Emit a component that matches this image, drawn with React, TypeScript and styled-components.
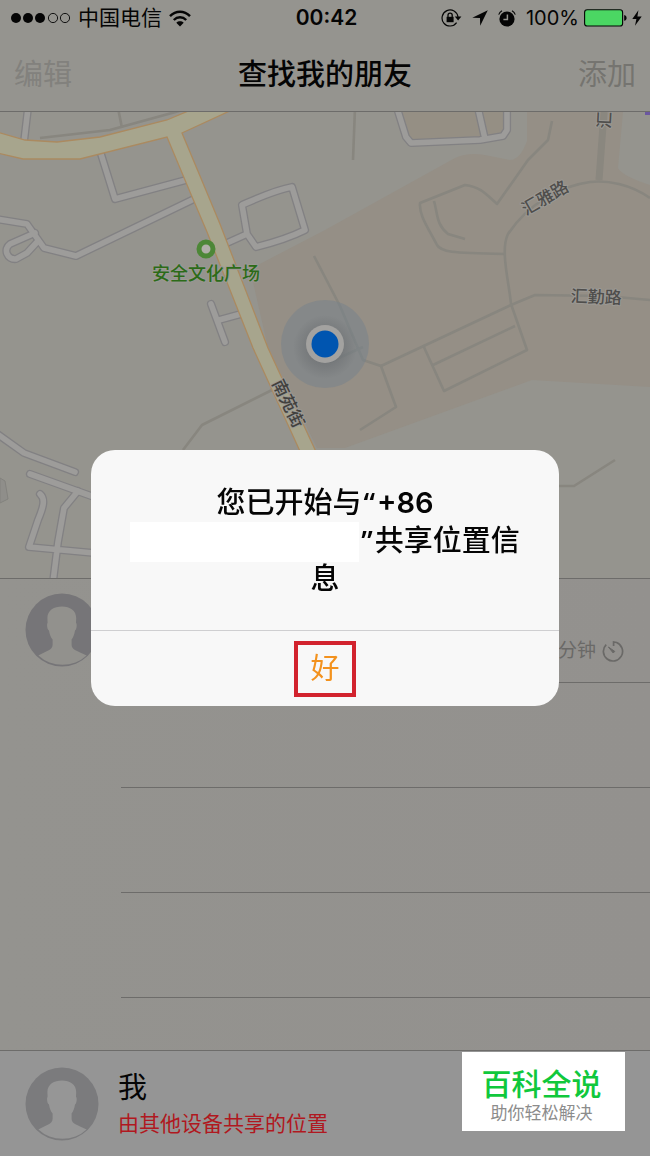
import React from "react";
import styled, { createGlobalStyle } from "styled-components";

const LATIN = `Inter, "Noto Sans CJK SC", sans-serif`;
const INK = "#050505";
const LINE = "#6d6c6a";

const GlobalStyle = createGlobalStyle`
  * { box-sizing: border-box; }
  body { margin: 0; background: #94938f; color: ${INK}; font-family: ${LATIN}; }
  h1, h2, p { margin: 0; font-weight: 400; }
  button { font: inherit; border: 0; padding: 0; background: none; cursor: pointer; }
  svg { display: block; }
`;

const Page = styled.div`
  min-height: 100vh;
  display: flex;
  flex-direction: column;
`;

const Header = styled.header`
  background: #95948f;
  border-bottom: 1px solid ${LINE};
`;

const StatusBar = styled.div`
  display: grid;
  grid-template-columns: 1fr auto 1fr;
  align-items: center;
  height: 36px;
  padding: 0 8px 0 11px;
  font-size: 20px;
  line-height: 24px;
`;

const StatusGroup = styled.div<{ $end?: boolean; $gap: number }>`
  display: flex;
  align-items: center;
  gap: ${(p) => p.$gap}px;
  justify-content: ${(p) => (p.$end ? "flex-end" : "flex-start")};
`;

const Carrier = styled.span`
  font-size: 21px;
`;

const Clock = styled.time`
  font-size: 21px;
  font-weight: 600;
`;

const NavBar = styled.nav`
  display: grid;
  grid-template-columns: 1fr auto 1fr;
  align-items: center;
  height: 75px;
  padding: 2px 14px 0;
  font-size: 29px;
  line-height: 40px;
`;

const Title = styled.h1`
  font-size: 29px;
  font-weight: 500;
`;

const NavButton = styled.button<{ $tone: string; $end?: boolean }>`
  color: ${(p) => p.$tone};
  justify-self: ${(p) => (p.$end ? "end" : "start")};
`;

const MapArea = styled.section`
  border-bottom: 1px solid ${LINE};
  svg { width: 100%; height: auto; }
`;

const List = styled.ul`
  flex: 1;
  margin: 0;
  padding: 0;
  list-style: none;
  background: linear-gradient(90deg, #94938f, #93918e);
`;

const Row = styled.li<{ $first?: boolean }>`
  display: flex;
  align-items: stretch;
  height: ${(p) => (p.$first ? 104 : 105)}px;
  padding-left: 25px;
`;

const AvatarSlot = styled.div`
  flex: none;
  display: flex;
  align-items: center;
  width: 96px;
  padding-bottom: 2px;
`;

const RowBody = styled.div`
  flex: 1;
  display: flex;
  align-items: flex-end;
  justify-content: flex-end;
  gap: 6px;
  padding: 0 25px 18px 0;
  border-bottom: 1px solid ${LINE};
  color: #6a6967;
  font-size: 19px;
  line-height: 26px;
`;

const Footer = styled.footer`
  display: flex;
  align-items: center;
  gap: 19px;
  height: 106px;
  padding: 0 25px;
  border-top: 1px solid ${LINE};
  background: #959595;
`;

const MeName = styled.p`
  font-size: 29px;
  line-height: 40px;
`;

const MeNote = styled.p`
  font-size: 21px;
  line-height: 32px;
  color: #b01820;
`;

const Overlay = styled.div`
  position: fixed;
  inset: 0;
  display: flex;
  align-items: center;
  justify-content: center;
`;

const Alert = styled.div`
  width: 72%;
  border-radius: 24px;
  background: #f8f8f8;
  overflow: hidden;
`;

const Message = styled.h2`
  padding: 34px 0 32px;
  font-size: 29px;
  font-weight: 500;
  line-height: 38px;
  text-align: center;
`;

const MessageLine = styled.span`
  display: flex;
  justify-content: center;
  height: 38px;
`;

const Strong = styled.span`
  font-weight: 600;
`;

const Quote = styled.span`
  margin: 0 2px;
  font-family: "Open Sans", sans-serif;
  font-weight: 600;
`;

const Redacted = styled.span`
  flex: none;
  width: 229px;
  height: 40px;
  background: #fff;
`;

const ConfirmButton = styled.button`
  display: flex;
  align-items: center;
  justify-content: center;
  width: 100%;
  height: 76px;
  border-top: 1px solid #cfcfd1;
  color: #f3921e;
  font-size: 29px;
  line-height: 40px;
`;

const Highlight = styled.span`
  padding: 4px 12px;
  border: 4px solid #d2232e;
`;

const Stamp = styled.aside`
  position: fixed;
  right: 25px;
  bottom: 25px;
  width: 163px;
  padding: 13px 4px 8px 0;
  background: #fff;
  text-align: center;
`;

const StampTitle = styled.p`
  font-size: 30px;
  font-weight: 500;
  line-height: 38px;
  color: #10c83c;
`;

const StampNote = styled.p`
  font-size: 17px;
  line-height: 20px;
  color: #8c8c8c;
`;

const SignalDots = () => (
  <svg width="60" height="12" viewBox="0 0 60 12" aria-label="信号">
    {[5, 17, 29].map((x) => (
      <circle key={x} cx={x} cy="6" r="5" fill={INK} />
    ))}
    {[42, 54].map((x) => (
      <circle key={x} cx={x} cy="6" r="4.6" fill="none" stroke={INK} strokeWidth="0.9" />
    ))}
  </svg>
);

const WifiIcon = () => (
  <svg width="22" height="17" viewBox="0 0 22 17" fill="none" stroke={INK} strokeWidth="2.4">
    <path d="M1 6.2C6.8.2 15.2.2 21 6.2" />
    <path d="M4.8 10C8.4 6.4 13.6 6.4 17.2 10" />
    <path d="M11 16.4 7.3 12.7C9.4 10.8 12.6 10.8 14.7 12.7Z" fill={INK} stroke="none" />
  </svg>
);

const RotationLockIcon = () => (
  <svg width="21" height="18" viewBox="0 0 21 18" fill="none" stroke={INK}>
    <path d="M15.6 13.6A8 8 0 1 1 17 8" strokeWidth="1.2" />
    <path d="M13.8 7.6H20.4L17.1 11.4Z" fill={INK} stroke="none" />
    <rect x="5.6" y="7.8" width="7" height="5.4" fill={INK} stroke="none" />
    <path d="M7 8V6.2a2.1 2.1 0 0 1 4.2 0V8" strokeWidth="1.3" />
  </svg>
);

const ArrowIcon = () => (
  <svg width="16" height="16" viewBox="0 0 16 16">
    <path d="M15.8.3 8.2 15.7 8 8.1.3 7.8Z" fill={INK} />
  </svg>
);

const AlarmIcon = () => (
  <svg width="18" height="17" viewBox="0 0 18 17" fill="none">
    <circle cx="9" cy="9" r="7.6" fill={INK} />
    <path d="M9.4 4.6V9.4H5.4" stroke="#95948f" strokeWidth="1.5" />
    <path d="M.7 4.6A7 7 0 0 1 4 .8M17.3 4.6A7 7 0 0 0 14 .8" stroke={INK} strokeWidth="1.1" />
  </svg>
);

const BatteryIcon = () => (
  <svg width="43" height="18" viewBox="0 0 43 18">
    <rect x="0.6" y="0.8" width="38" height="16.2" rx="2.6" fill="#4bd763" stroke={INK} strokeWidth="1.1" />
    <path d="M40.2 6C43.4 6.6 43.4 11.2 40.2 11.8Z" fill={INK} />
  </svg>
);

const BoltIcon = () => (
  <svg width="10" height="16" viewBox="0 0 10 16">
    <path d="M6.4.2.3 9H4.4L3 15.8 9.7 6.4H5.4Z" fill={INK} />
  </svg>
);

const TimerIcon = () => (
  <svg width="23" height="23" viewBox="0 0 23 23" fill="none" stroke="#6a6967" strokeWidth="1.7">
    <path d="M4.2 3.6A9.6 9.6 0 1 0 14.6 1.5L11.6 1V5" />
    <path d="M6.4 6 12.8 10.4 11.2 12Z" fill="#6a6967" strokeWidth="1" />
  </svg>
);

const Avatar = ({ disc, figure }: { disc: string; figure: string }) => (
  <svg width="74" height="74" viewBox="0 0 74 74" aria-hidden="true">
    <circle cx="37" cy="37" r="36.5" fill={disc} />
    <path
      d="M37 13.4C29 13.4 22.2 17.4 22.4 25L22.6 30C21.6 30.6 22 36.6 24 37.6C24.6 41.4 25.6 44.4 27.6 46.6V52C27.4 57.4 21 58 13.4 62.4A35.4 35.4 0 0 0 61.6 62.4C53 58 46.8 57.4 46.6 52V46.6C48.4 44.4 49.4 41.4 50 37.6C51.8 36.6 52.2 30.6 51 30L51.2 25C51.2 17.4 45 13.4 37 13.4Z"
      fill={figure}
    />
  </svg>
);

const casedRoads = [
  "M28 -4 24 30",
  "M101 42 115 87 186 68",
  "M-4 107 27 112 44 136 76 144 192 88",
  "M35 121 10 132C3 137 7 148 16 147L27 141 38 129",
  "M227 131 247 122M247 122 242 93C258 86 275 78 292 75L305 118C289 126 272 131 256 135Z",
  "M211 192 225 230M219 208 241 202",
  "M397 -4 406 25 411 31 480 28 503 24 507 18V-4M478 -4 485 27",
  "M-4 321 24 341 75 360",
  "M30 362 94 385M78 379 64 396 58 430 53 470M40 382C46 387 43 396 38 408L29 435 94 441",
];

const faintRoads = [
  "M118 -4 122 16",
  "M40 26 110 18 190 -4",
  "M355 -4 353 48",
  "M552 9 548 28 528 48 497 92C485 81 480 75 465 73L420 91C419 103 427 114 437 133 441 140 450 141 505 142",
  "M434 89C438 103 436 112 448 122L465 127",
  "M650 86C630 72 607 68 590 70 560 74 528 92 508 122 500 138 509 170 511 192L527 238 444 279 423 233",
  "M650 188 605 184 535 183 511 193 381 254 396 295 360 318",
  "M515 214 433 253",
  "M314 144 340 194 363 248 381 254",
  "M363 235 330 250",
  "M272 278 202 313 183 338",
  "M559 374H574L615 348",
];

const MapDrawing = () => (
  <svg viewBox="0 0 650 466" role="img" aria-label="地图">
    <defs>
      <radialGradient id="dotShade">
        <stop offset="0.5" stopColor="#66696c" stopOpacity="0.5" />
        <stop offset="1" stopColor="#66696c" stopOpacity="0" />
      </radialGradient>
    </defs>
    <rect width="650" height="466" fill="#95948e" />
    <path
      d="M250 157 325 118 455 46Q470 39 490 44L510 48Q520 48 527 29V0H623L618 56Q622 64 650 73V275L532 268 345 336H317L268 236Z"
      fill="#958f86"
    />
    <path d="M397 -4 410 31 507 25V-4Z" fill="#958f84" />
    <path d="M0 366 5 369 8 387 0 391Z" fill="#8f8e8a" stroke="#83827e" />
    <g fill="none" stroke="#88867f" strokeWidth="2.6" strokeLinejoin="round">
      {faintRoads.map((d) => (
        <path key={d} d={d} />
      ))}
    </g>
    <path d="M604 0 599 68" stroke="#8a877f" strokeWidth="7" />
    <g fill="none" stroke="#828183" strokeWidth="8.2" strokeLinejoin="round" strokeLinecap="round">
      {casedRoads.map((d) => (
        <path key={d} d={d} />
      ))}
    </g>
    <g fill="none" stroke="#9d9c9a" strokeWidth="5.6" strokeLinejoin="round" strokeLinecap="round">
      {casedRoads.map((d) => (
        <path key={d} d={d} />
      ))}
    </g>
    <path
      d="M-3 20 25 28 57 30 100 25 167 8 193 -3H234L182 21 200 64 220 112 268 236 330 370H314L253 236 207 120 190 80 167 25 80 47H23L-3 41Z"
      fill="#a7a58d"
      stroke="#ab8a60"
      strokeWidth="1.3"
    />
    <g
      fontFamily='"Noto Sans CJK SC", sans-serif'
      fontSize="17"
      fontWeight="500"
      textAnchor="middle"
      fill="#4f4e4c"
      stroke="#9b9994"
      strokeWidth="2"
      paintOrder="stroke"
      strokeLinejoin="round"
    >
      <text x="206" y="168" fill="#2c6b18" fontSize="18">安全文化广场</text>
      <text transform="translate(548 91) rotate(-30)">汇雅路</text>
      <text transform="translate(596 191) rotate(2)">汇勤路</text>
      <text transform="translate(283 294) rotate(64)" fill="#42413e">南苑街</text>
      <text transform="translate(610 17) rotate(-87)" textAnchor="start">汇</text>
    </g>
    <path d="M645 0h5v3h-5z" fill="#6b57a0" />
    <circle cx="206" cy="137" r="7" fill="#b1afa9" stroke="#4d8737" strokeWidth="5" />
    <circle cx="325" cy="232" r="44" fill="#75828c" fillOpacity="0.5" />
    <circle cx="325" cy="235" r="32" fill="url(#dotShade)" />
    <circle cx="325" cy="232" r="19" fill="#a3a2a0" />
    <circle cx="325" cy="232" r="13.5" fill="#0055b0" />
  </svg>
);

export default function App() {
  return (
    <>
      <GlobalStyle />
      <Page>
        <Header>
          <StatusBar>
            <StatusGroup $gap={7}>
              <SignalDots />
              <Carrier>中国电信</Carrier>
              <WifiIcon />
            </StatusGroup>
            <Clock>00:42</Clock>
            <StatusGroup $end $gap={10}>
              <RotationLockIcon />
              <ArrowIcon />
              <AlarmIcon />
              <StatusGroup $gap={5}>
                <span>100%</span>
                <BatteryIcon />
                <BoltIcon />
              </StatusGroup>
            </StatusGroup>
          </StatusBar>
          <NavBar>
            <NavButton $tone="#82817d">编辑</NavButton>
            <Title>查找我的朋友</Title>
            <NavButton $tone="#757470" $end>添加</NavButton>
          </NavBar>
        </Header>
        <MapArea>
          <MapDrawing />
        </MapArea>
        <List>
          <Row $first>
            <AvatarSlot>
              <Avatar disc="#767578" figure="#92918d" />
            </AvatarSlot>
            <RowBody>
              <span>分钟</span>
              <TimerIcon />
            </RowBody>
          </Row>
          {[1, 2, 3].map((n) => (
            <Row key={n}>
              <AvatarSlot />
              <RowBody />
            </Row>
          ))}
        </List>
        <Footer>
          <Avatar disc="#7b7b7d" figure="#969696" />
          <div>
            <MeName>我</MeName>
            <MeNote>由其他设备共享的位置</MeNote>
          </div>
        </Footer>
      </Page>
      <Overlay>
        <Alert role="alertdialog" aria-labelledby="share-message">
          <Message id="share-message">
            <MessageLine>
              您已开始与<Quote>“</Quote>
              <Strong>+86</Strong>
            </MessageLine>
            <MessageLine>
              <Redacted />
              <Quote>”</Quote>共享位置信
            </MessageLine>
            <MessageLine>息</MessageLine>
          </Message>
          <ConfirmButton>
            <Highlight>好</Highlight>
          </ConfirmButton>
        </Alert>
      </Overlay>
      <Stamp>
        <StampTitle>百科全说</StampTitle>
        <StampNote>助你轻松解决</StampNote>
      </Stamp>
    </>
  );
}
